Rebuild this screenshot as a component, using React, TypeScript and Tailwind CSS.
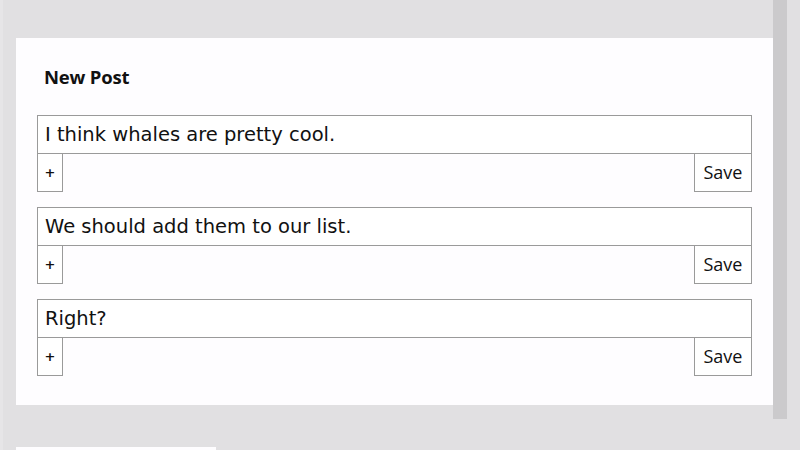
import React from 'react'

const posts = [
  'I think whales are pretty cool.',
  'We should add them to our list.',
  'Right?',
]

function PostRow({ text }: { text: string }) {
  return (
    <div className="flex flex-col">
      <div className="h-[39px] border border-[#9a9a9a] bg-white px-[7px] flex items-center text-[19.5px] text-[#111] font-['DejaVu_Sans',sans-serif]">
        {text}
      </div>
      <div className="-mt-px flex justify-between">
        <button className="h-[39px] w-[26px] border border-[#9a9a9a] bg-white text-[13px] font-semibold text-[#111] font-['DejaVu_Sans',sans-serif] flex items-center justify-center">
          +
        </button>
        <button className="h-[39px] w-[58px] border border-[#9a9a9a] bg-white text-[18px] text-[#111] font-['Open_Sans',sans-serif] flex items-center justify-center">
          Save
        </button>
      </div>
    </div>
  )
}

export default function App() {
  return (
    <div className="w-[800px] h-[450px] overflow-hidden flex bg-[#e1e0e2] border-l-[3px] border-[#e6e5e7]">
      <div className="flex-1 flex flex-col pl-[13px] pt-[38px]">
        <div className="w-[757px] bg-[#fefdff] px-[21px] pt-[29px] pb-[29px]">
          <h2 className="text-[18.5px] leading-[20px] font-bold text-[#111] font-['Open_Sans',sans-serif] tracking-[-0.2px] pl-[7px] mb-[28px]">
            New Post
          </h2>
          <div className="flex flex-col gap-[15px]">
            {posts.map(p => (
              <PostRow key={p} text={p} />
            ))}
          </div>
        </div>
        <div className="mt-[42px] w-[200px] h-[20px] bg-[#fefdff]" />
      </div>
      <div className="w-[14px] flex flex-col">
        <div className="h-[419px] bg-[#cbcacc]" />
      </div>
      <div className="w-[13px]" />
    </div>
  )
}
